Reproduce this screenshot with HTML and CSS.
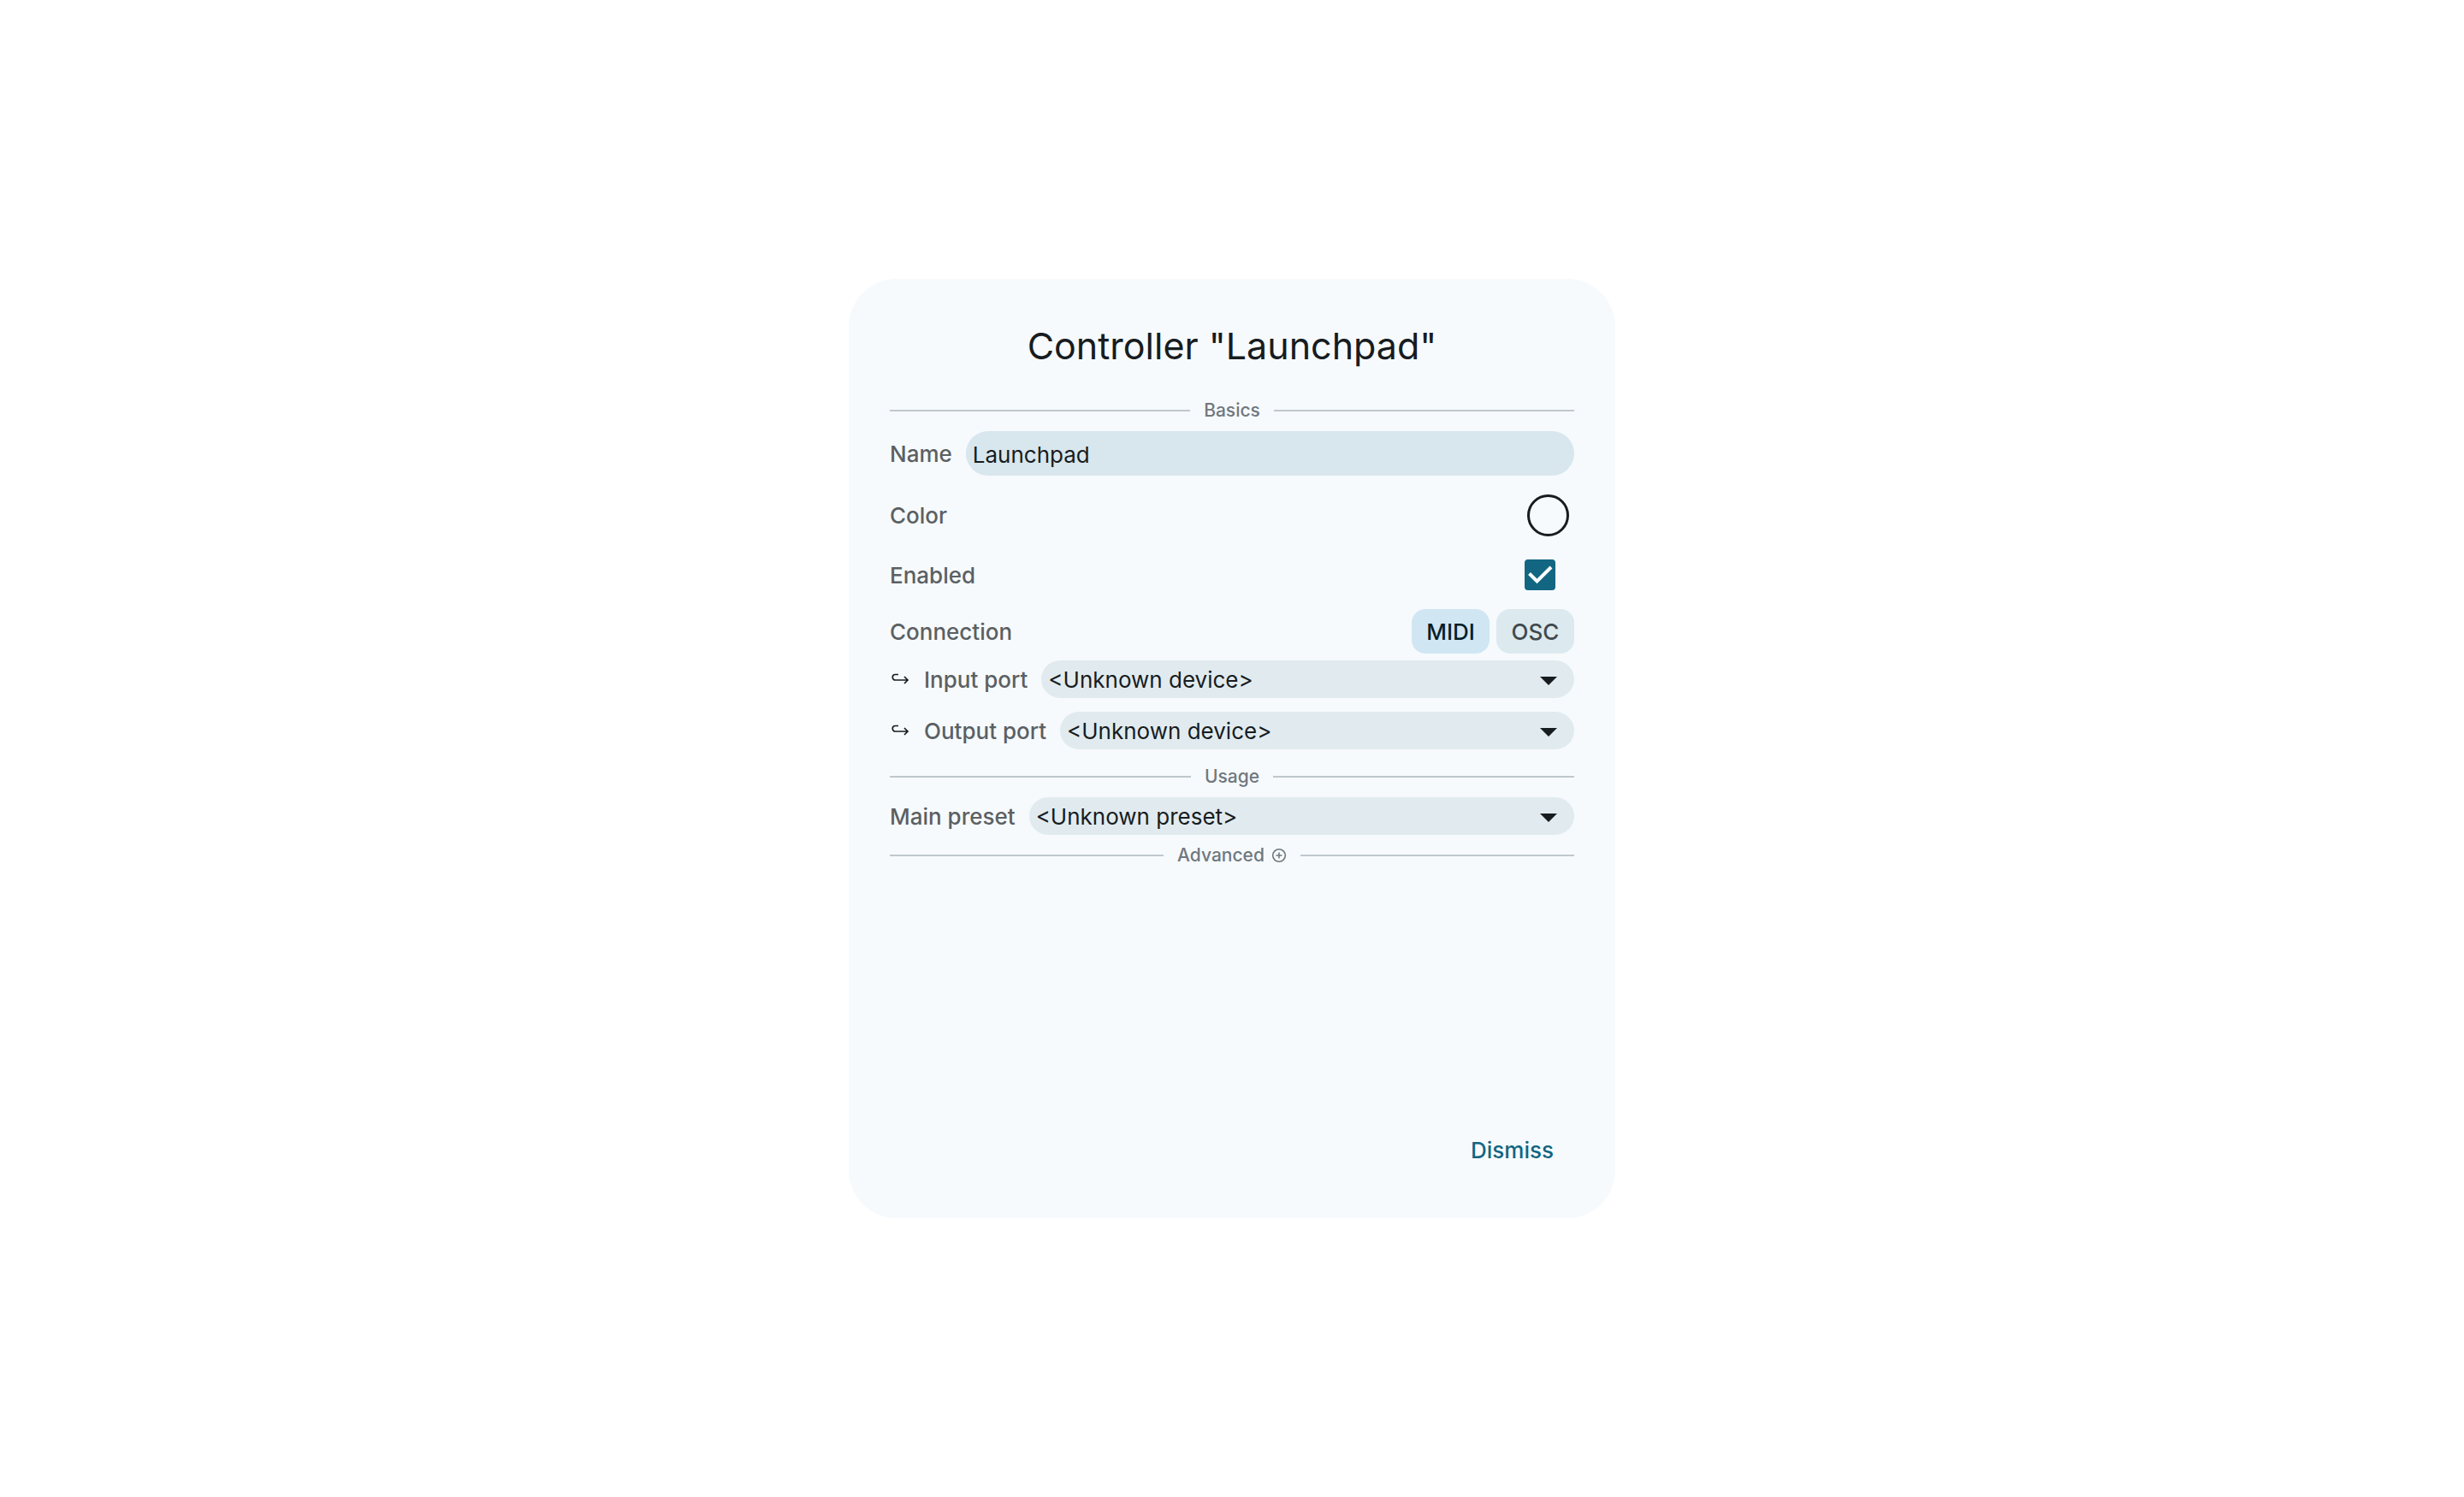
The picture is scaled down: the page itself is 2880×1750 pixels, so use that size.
FILE: index.html
```html
<!DOCTYPE html>
<html lang="en">
<head>
<meta charset="utf-8">
<meta name="viewport" content="width=device-width, initial-scale=1">
<title>Controller "Launchpad"</title>
<link rel="stylesheet" href="styles.css">
</head>
<body>
<main class="dialog">
  <h1 class="title">Controller "Launchpad"</h1>
  <form class="form">
    <h2 class="divider">Basics</h2>
    <div class="row">
      <label class="label" for="name">Name</label>
      <input class="text-field" id="name" type="text" value="Launchpad">
    </div>
    <div class="row row-color">
      <span class="label" id="color-label">Color</span>
      <button class="swatch" type="button" aria-labelledby="color-label"></button>
    </div>
    <div class="row row-enabled">
      <label class="label" for="enabled">Enabled</label>
      <span class="check">
        <input id="enabled" type="checkbox" checked>
        <svg class="check-mark" viewBox="0 0 36 36" aria-hidden="true"><path d="M5.500 16.500 14.500 25.500 31 9" fill="none" stroke="#fff" stroke-width="4"/></svg>
      </span>
    </div>
    <div class="row row-connection">
      <span class="label">Connection</span>
      <div class="chips">
        <button class="chip chip-active" type="button" aria-pressed="true">MIDI</button>
        <button class="chip" type="button" aria-pressed="false">OSC</button>
      </div>
    </div>
    <div class="row row-port">
      <svg class="hook" viewBox="0 0 26 26" aria-hidden="true"><path d="M10 7.500H6.500a3 3 0 0 0 0 6.500H21M17 10l4 4-4 4" fill="none" stroke="currentColor" stroke-width="1.700"/></svg>
      <label class="label" for="input-port">Input port</label>
      <span class="select">
        <select id="input-port"><option>&lt;Unknown device&gt;</option></select>
      </span>
    </div>
    <div class="row row-port">
      <svg class="hook" viewBox="0 0 26 26" aria-hidden="true"><path d="M10 7.500H6.500a3 3 0 0 0 0 6.500H21M17 10l4 4-4 4" fill="none" stroke="currentColor" stroke-width="1.700"/></svg>
      <label class="label" for="output-port">Output port</label>
      <span class="select">
        <select id="output-port"><option>&lt;Unknown device&gt;</option></select>
      </span>
    </div>
    <h2 class="divider">Usage</h2>
    <div class="row">
      <label class="label" for="preset">Main preset</label>
      <span class="select">
        <select id="preset"><option>&lt;Unknown preset&gt;</option></select>
      </span>
    </div>
    <h2 class="divider divider-advanced">
      <button class="expand" type="button">Advanced
        <svg class="plus" viewBox="0 0 18 18" aria-hidden="true"><path d="M9 5.500v7M5.500 9h7" stroke="currentColor" stroke-width="1.500"/><circle cx="9" cy="9" r="7.300" fill="none" stroke="currentColor" stroke-width="1.600"/></svg>
      </button>
    </h2>
  </form>
  <div class="actions">
    <button class="dismiss" type="button">Dismiss</button>
  </div>
</main>
</body>
</html>
```
FILE: styles.css
```css
* {
  box-sizing: border-box;
}

body {
  margin: 0;
  min-height: 100vh;
  display: flex;
  align-items: center;
  justify-content: center;
  background: #fff;
  color: #171c1f;
  font: 400 26px/32px Inter, "Liberation Sans", sans-serif;
}

button,
input,
select {
  margin: 0;
  padding: 0;
  border: 0;
  background: none;
  color: inherit;
  font: inherit;
}

.dialog {
  display: flex;
  flex-direction: column;
  width: 100%;
  max-width: 896px;
  min-height: 1098px;
  padding: 48px;
  border-radius: 56px;
  background: #f6fafd;
}

.title {
  margin: 0 0 28px;
  font-size: 43px;
  font-weight: 400;
  line-height: 60px;
  text-align: center;
}

.divider {
  display: flex;
  align-items: center;
  gap: 16px;
  margin: 0;
  color: #70787d;
  font-size: 21px;
  font-weight: 500;
  line-height: 36px;
}

.divider::before,
.divider::after {
  content: "";
  flex: 1;
  height: 2px;
  background: #bfc8cd;
}

.divider-advanced {
  margin-top: 6px;
}

.expand {
  display: flex;
  align-items: center;
  gap: 8px;
}

.plus {
  width: 18px;
  height: 18px;
}

.row {
  display: flex;
  align-items: center;
  gap: 16px;
  margin-top: 6px;
  color: #5b6063;
  font-weight: 500;
}

.label {
  padding-top: 2px;
}

.text-field {
  flex: 1;
  min-width: 0;
  height: 52px;
  padding: 2px 8px 0;
  border-radius: 26px;
  background: #d8e6ed;
  color: #171c1f;
  font-weight: 400;
}

.row-color,
.row-enabled,
.row-connection {
  justify-content: space-between;
}

.row-color {
  height: 80px;
}

.swatch {
  width: 49px;
  height: 49px;
  margin-right: 6px;
  border: 3px solid #171c1f;
  border-radius: 50%;
}

.row-enabled {
  height: 48px;
}

.check {
  display: grid;
  margin-right: 22px;
}

.check input,
.check-mark {
  grid-area: 1 / 1;
  width: 36px;
  height: 36px;
}

.check input {
  appearance: none;
  border: 2px solid #126682;
  border-radius: 4px;
}

.check input:checked {
  background: #126682;
}

.check-mark {
  pointer-events: none;
}

.check input:not(:checked) + .check-mark {
  visibility: hidden;
}

.row-connection {
  margin-top: 16px;
}

.chips {
  display: flex;
  gap: 8px;
}

.chip {
  min-width: 91px;
  height: 52px;
  padding-top: 2px;
  border-radius: 16px;
  background: #dce9ee;
  color: #40484c;
}

.chip-active {
  background: #d0e6f3;
  color: #071e28;
}

.row-port {
  margin: 8px 0;
}

.hook {
  width: 26px;
  height: 26px;
  margin-right: -2px;
  color: #171c1f;
}

.select {
  display: grid;
  flex: 1;
  align-items: center;
}

.select select {
  grid-area: 1 / 1;
  width: 100%;
  height: 44px;
  padding: 2px 56px 0 8px;
  appearance: none;
  border-radius: 22px;
  background: #e1ebef;
  color: #171c1f;
  font-weight: 400;
}

.select::after {
  content: "";
  grid-area: 1 / 1;
  justify-self: end;
  width: 20px;
  height: 10px;
  margin: 4px 20px 0 0;
  background: #171c1f;
  clip-path: polygon(0 0, 100% 0, 50% 100%);
  pointer-events: none;
}

.row-port + .row-port {
  margin-top: 16px;
}

.row-port + .divider {
  margin-top: 14px;
}

.actions {
  display: flex;
  justify-content: flex-end;
  margin-top: auto;
}

.dismiss {
  height: 64px;
  padding: 2px 24px 0;
  color: #126682;
  font-weight: 500;
}
```
